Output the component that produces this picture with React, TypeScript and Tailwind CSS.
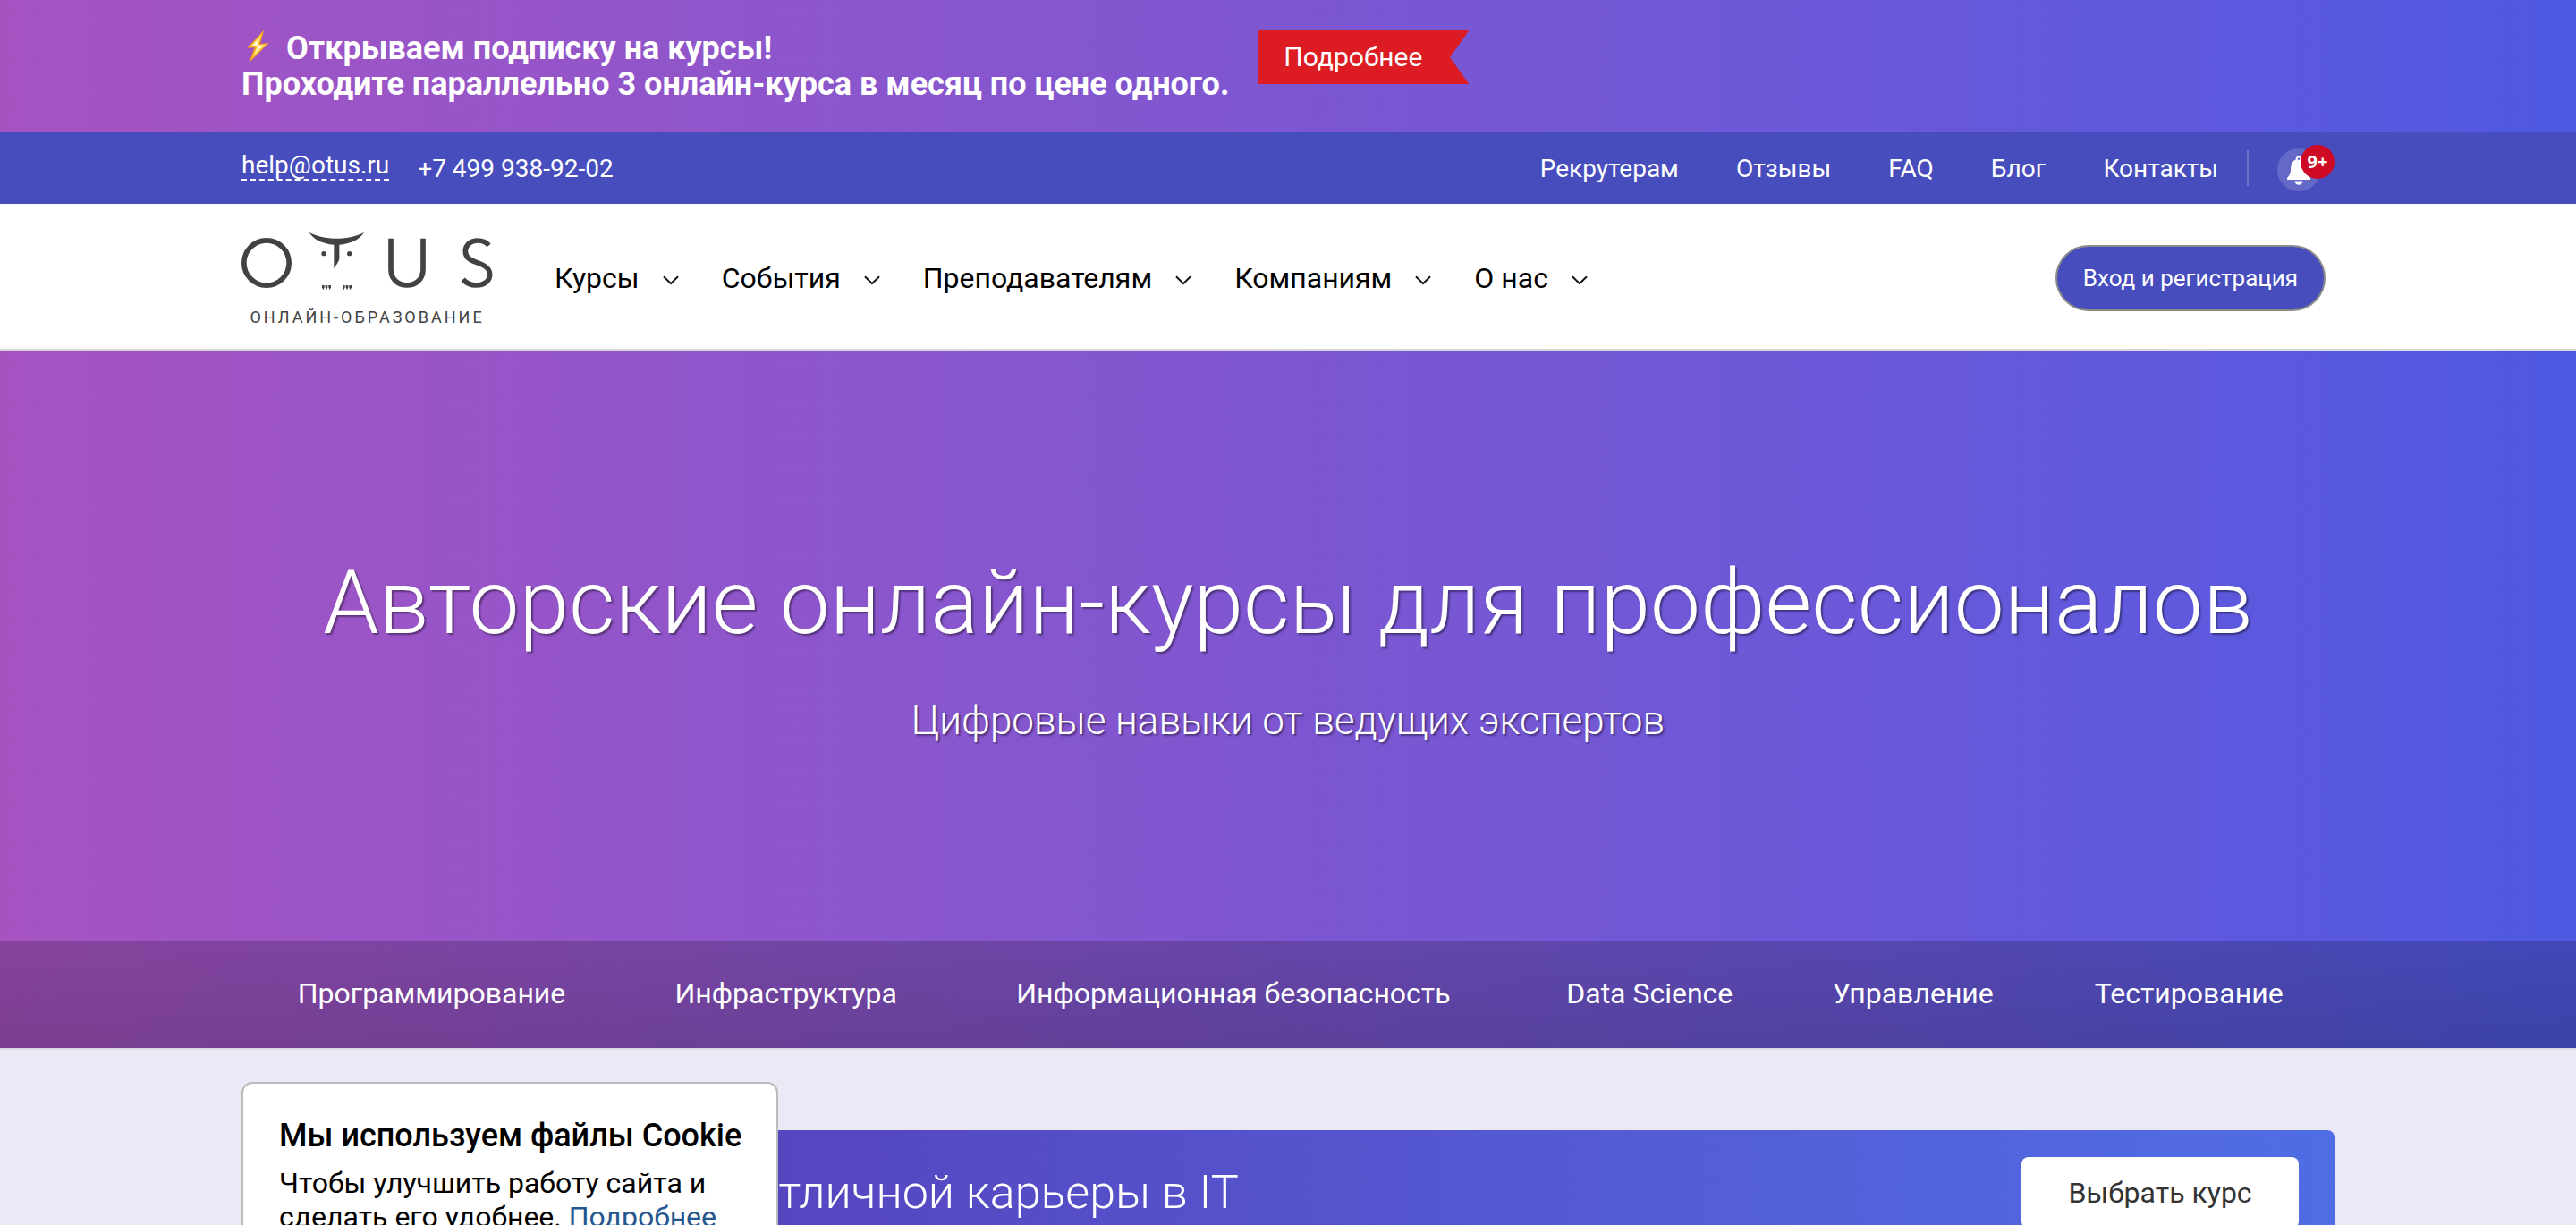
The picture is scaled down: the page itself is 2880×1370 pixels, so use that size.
import React from "react";

const topLinks = ["Рекрутерам", "Отзывы", "FAQ", "Блог", "Контакты"];
const menu = ["Курсы", "События", "Преподавателям", "Компаниям", "О нас"];
const categories = [
  "Программирование",
  "Инфраструктура",
  "Информационная безопасность",
  "Data Science",
  "Управление",
  "Тестирование",
];

function Bolt() {
  return (
    <svg viewBox="0 0 24 34" className="mb-1 h-[38px] w-7" aria-hidden="true">
      <path d="M18.5 0.5 1.5 18.6 9 18.2 3.2 33.5 23.4 13.4 14.6 14.4Z" fill="#f9a11c" />
      <path d="M16.2 4.6 4.3 17.3 11.2 17 6.8 28 20.5 14.7 12.4 15.5Z" fill="#ffe36a" />
      <path d="M14 9 7 16 13 16 10 23 17.5 15.6 11.5 15.8Z" fill="#fffbe0" />
    </svg>
  );
}

function Chevron() {
  return (
    <svg viewBox="0 0 18 11" className="mt-1 h-[11px] w-[18px]" fill="none" aria-hidden="true">
      <path d="M1 1.2 9 9.2 17 1.2" stroke="#111" strokeWidth="2" />
    </svg>
  );
}

function Logo() {
  return (
    <svg viewBox="60 57 843 198" className="h-[66px] w-[281px]" fill="none" aria-hidden="true">
      <g stroke="#424242" strokeWidth="17">
        <circle cx="144" cy="162" r="75.5" />
        <path d="M561 80V184C561 216 584 237 615 237S669 216 669 184V80" />
        <path d="M890 103C880 92 866 87 852 87C828 87 811 102 811 122C811 142 822 151 850 161C880 171 893 182 893 201C893 223 873 237 848 237C829 237 814 230 803 217" />
      </g>
      <g fill="#424242">
        <path d="M287 59C335 87 423 87 471 59C455 86 425 97 388 101V148C388 154 379 168 370 181V101C333 97 303 86 287 59Z" />
        <circle cx="336" cy="131" r="8" />
        <circle cx="422" cy="131" r="8" />
        {[334, 345, 356, 403, 414, 425].map((x) => (
          <path key={x} d={`M${x - 4} 237H${x + 4}V244L${x} 253 ${x - 4} 244Z`} />
        ))}
      </g>
    </svg>
  );
}

function Bell() {
  return (
    <svg viewBox="0 0 26 33" className="h-[33px] w-[26px]" aria-hidden="true">
      <path
        d="M13 0.5a3.4 3.4 0 0 1 3.3 4C20 6 21.6 9.4 21.8 13.5C22 19 22.6 21.5 26 25V27H0V25C3.4 21.5 4 19 4.2 13.5C4.4 9.4 6 6 9.7 4.5A3.4 3.4 0 0 1 13 0.5Z"
        fill="#fff"
      />
      <circle cx="13" cy="3.7" r="1.3" fill="#6468c6" />
      <path d="M8.5 28.5H17.5A4.5 4.2 0 0 1 8.5 28.5Z" fill="#fff" />
    </svg>
  );
}

export default function App() {
  return (
    <div className="h-screen overflow-hidden bg-[#ece9f6] font-['Roboto',sans-serif] text-black">
      <div className="bg-linear-to-r from-[#a653c2] via-[#7d56d1] to-[#4f59e2]">
        <div className="mx-auto flex h-[148px] max-w-[2340px] items-start pt-[34px] text-white">
          <div className="text-4xl leading-10 font-bold">
            <div className="flex h-10 items-center gap-[18px] pl-1">
              <Bolt />
              <span>Открываем подписку на курсы!</span>
            </div>
            <div>Проходите параллельно 3 онлайн-курса в месяц по цене одного.</div>
          </div>
          <a
            href="#subscription"
            className="ml-8 flex h-[60px] w-[236px] items-center bg-[#dc1c22] pb-0.5 pl-[29px] text-[30px] [clip-path:polygon(0_0,100%_0,91%_50%,100%_100%,0_100%)]"
          >
            Подробнее
          </a>
        </div>
      </div>

      <div className="bg-[#474dbc]">
        <div className="mx-auto flex h-20 max-w-[2340px] items-center text-[28px] leading-8 text-white">
          <a href="mailto:help@otus.ru" className="mb-1 border-b-2 border-dashed border-white leading-[30px]">
            help@otus.ru
          </a>
          <a href="tel:+74999389202" className="ml-8 pt-0.5">+7 499 938-92-02</a>
          <nav className="ml-auto flex gap-16 pt-0.5">
            {topLinks.map((label) => (
              <a key={label} href="#info">{label}</a>
            ))}
          </nav>
          <div className="ml-8 h-10 w-0.5 bg-[#6d72ca]" />
          <button
            type="button"
            aria-label="Уведомления"
            className="relative mt-1 mr-4 ml-8 flex size-12 items-center justify-center rounded-full bg-[#6468c6]"
          >
            <Bell />
            <span className="absolute -top-1 left-[26px] flex size-[38px] items-center justify-center rounded-full bg-[#ce0a24] font-['Open_Sans',sans-serif] text-xl font-bold">
              9+
            </span>
          </button>
        </div>
      </div>

      <header className="border-b-2 border-[#d6d6d8] bg-white">
        <div className="mx-auto flex h-[162px] max-w-[2340px] items-center pt-1">
          <a href="#home" aria-label="OTUS" className="flex w-[281px] flex-col items-center pt-1.5">
            <Logo />
            <span className="mt-4 text-lg tracking-[3px] text-[#424242]">ОНЛАЙН-ОБРАЗОВАНИЕ</span>
          </a>
          <nav className="ml-[69px] flex gap-12">
            {menu.map((label) => (
              <button key={label} type="button" className="flex items-center gap-[26px] text-[32px] leading-10 text-black">
                {label}
                <Chevron />
              </button>
            ))}
          </nav>
          <button
            type="button"
            className="mr-2.5 ml-auto h-[74px] rounded-full border-2 border-[#8a8a8a] bg-[#474dbc] px-[29px] text-[26px] text-white"
          >
            Вход и регистрация
          </button>
        </div>
      </header>

      <section className="bg-linear-to-r from-[#a653c2] via-[#7d56d1] to-[#4f59e2] text-center font-light text-white">
        <div className="flex h-[660px] flex-col items-center pt-[222px]">
          <h1 className="text-[100px] leading-[120px] [text-shadow:2px_2px_2px_rgba(0,0,0,0.4)]">
            Авторские онлайн-курсы для профессионалов
          </h1>
          <p className="mt-[46px] text-[44px] leading-[52px] [text-shadow:2px_2px_2px_rgba(0,0,0,0.4)]">
            Цифровые навыки от ведущих экспертов
          </p>
        </div>
        <nav className="bg-linear-to-b from-black/19 to-black/26">
          <div className="mx-auto table h-[120px] w-full max-w-[2340px] text-[32px] font-normal">
            {categories.map((label) => (
              <a key={label} href="#category" className="table-cell px-10 pb-0.5 align-middle whitespace-nowrap">
                {label}
              </a>
            ))}
          </div>
        </nav>
      </section>

      <main className="border-t-2 border-[#dfdce6]">
        <div className="relative mx-auto max-w-[2340px] pt-[90px]">
          <section className="flex items-center justify-between rounded-lg bg-linear-to-r from-[#5538b4] to-[#506de5] py-[30px] pr-10 pl-[572px]">
            <h2 className="text-[52px] leading-[60px] font-light text-white">отличной карьеры в IT</h2>
            <button type="button" className="h-20 w-[310px] rounded-lg bg-white text-[32px] text-[#333]">
              Выбрать курс
            </button>
          </section>
          <aside className="absolute top-9 left-0 w-[600px] rounded-xl border-2 border-[#bbb] bg-white px-10 pt-9 pb-10 text-[32px] leading-[38px]">
            <h3 className="mb-3 text-4xl leading-[44px] font-medium whitespace-nowrap">Мы используем файлы Cookie</h3>
            <p>
              Чтобы улучшить работу сайта и сделать его удобнее. <a href="#cookie" className="text-[#24568f]">Подробнее</a>
            </p>
          </aside>
        </div>
      </main>
    </div>
  );
}
